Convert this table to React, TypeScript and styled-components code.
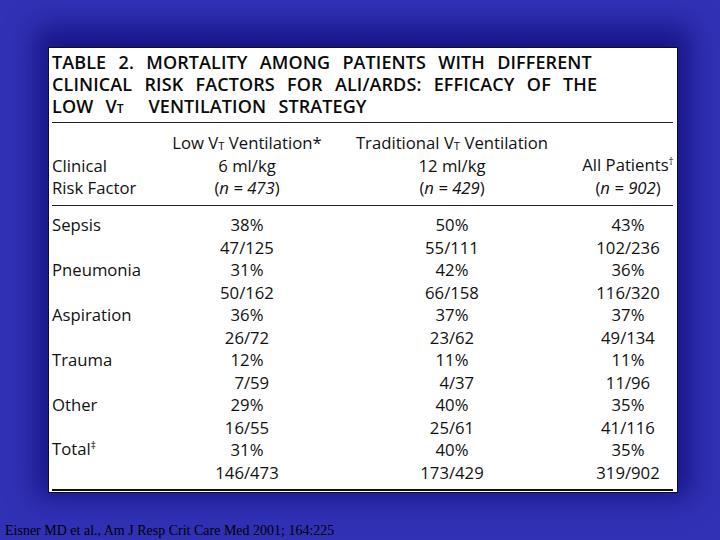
import React from "react";
import styled, { createGlobalStyle } from "styled-components";

const GlobalStyle = createGlobalStyle`
  html, body {
    margin: 0;
    padding: 0;
    background: #3131b6;
  }
`;

const Slide = styled.div`
  width: 720px;
  height: 540px;
  box-sizing: border-box;
  display: flex;
  flex-direction: column;
  background: #3131b6;
  overflow: hidden;
`;

const PanelArea = styled.div`
  padding: 47px 0 0 48px;
`;

const Panel = styled.div`
  width: 630px;
  height: 446px;
  box-sizing: border-box;
  background: #ffffff;
  border: 1px solid #0c0c30;
  box-shadow: 0 -8px 26px 12px rgba(12, 8, 110, 0.7);
  padding: 3px 4px 0 3px;
  font-family: "Open Sans", "Liberation Sans", sans-serif;
  color: #111;
  display: flex;
  flex-direction: column;
`;

const Title = styled.h1`
  margin: 0;
  font-size: 18px;
  font-weight: 600;
  line-height: 22px;
  word-spacing: 7.5px;
  letter-spacing: 0.1px;
  color: #0a0a0a;
  padding-bottom: 2px;
  border-bottom: 1px solid #222;
`;

const Small = styled.span<{ $lower?: boolean }>`
  font-size: 0.68em;
  ${(p) => (p.$lower ? "vertical-align: -0.05em;" : "")}
`;

const Table = styled.div<{ $row: number }>`
  display: grid;
  grid-template-columns: 120px 150px 260px 92px;
  grid-auto-rows: ${(p) => p.$row}px;
  align-items: center;
  font-size: 16.7px;
  line-height: ${(p) => p.$row}px;
`;

const HeadBlock = styled(Table)`
  padding: 10px 0 6px;
  border-bottom: 1px solid #222;
`;

const BodyBlock = styled(Table)`
  padding: 8px 0 5px;
  border-bottom: 2px solid #111;
`;

const Cell = styled.div<{ $align?: "left" | "center" }>`
  text-align: ${(p) => p.$align ?? "center"};
  white-space: pre;
`;

const Label = styled(Cell).attrs({ $align: "left" })``;

const Em = styled.i``;

const Sup = styled.span`
  font-size: 0.6em;
  position: relative;
  top: -0.6em;
`;

const Caption = styled.div`
  margin-top: auto;
  padding: 0 0 1px 5px;
  font-family: "Liberation Serif", serif;
  font-size: 14px;
  color: #000;
`;

type Row = { label: React.ReactNode; vals: [string, string, string][] };

const rows: Row[] = [
  { label: "Sepsis", vals: [["38%", "50%", "43%"], ["47/125", "55/111", "102/236"]] },
  { label: "Pneumonia", vals: [["31%", "42%", "36%"], ["50/162", "66/158", "116/320"]] },
  { label: "Aspiration", vals: [["36%", "37%", "37%"], ["26/72", "23/62", "49/134"]] },
  { label: "Trauma", vals: [["12%", "11%", "11%"], ["\u20077/59", "\u20074/37", "11/96"]] },
  { label: "Other", vals: [["29%", "40%", "35%"], ["16/55", "25/61", "41/116"]] },
  {
    label: (
      <>
        Total<Sup>‡</Sup>
      </>
    ),
    vals: [["31%", "40%", "35%"], ["146/473", "173/429", "319/902"]],
  },
];

const N = ({ v }: { v: string }) => (
  <>
    (<Em>n = {v}</Em>)
  </>
);

export default function App() {
  return (
    <Slide>
      <GlobalStyle />
      <PanelArea>
        <Panel>
          <Title>
            TABLE 2. MORTALITY AMONG PATIENTS WITH DIFFERENT
            <br />
            CLINICAL RISK FACTORS FOR ALI/ARDS: EFFICACY OF THE
            <br />
            LOW V<Small>T</Small>&nbsp; VENTILATION STRATEGY
          </Title>
          <HeadBlock $row={22}>
            <Label />
            <Cell>
              Low V<Small $lower>T</Small> Ventilation*
            </Cell>
            <Cell>
              Traditional V<Small $lower>T</Small> Ventilation
            </Cell>
            <Cell />
            <Label>Clinical</Label>
            <Cell>6 ml/kg</Cell>
            <Cell>12 ml/kg</Cell>
            <Cell>
              All Patients<Sup>†</Sup>
            </Cell>
            <Label>Risk Factor</Label>
            <Cell>
              <N v="473" />
            </Cell>
            <Cell>
              <N v="429" />
            </Cell>
            <Cell>
              <N v="902" />
            </Cell>
          </HeadBlock>
          <BodyBlock $row={22.5}>
            {rows.map((r, i) => (
              <React.Fragment key={i}>
                <Label>{r.label}</Label>
                {r.vals[0].map((v, j) => (
                  <Cell key={`a${j}`}>{v}</Cell>
                ))}
                <Label />
                {r.vals[1].map((v, j) => (
                  <Cell key={`b${j}`}>{v}</Cell>
                ))}
              </React.Fragment>
            ))}
          </BodyBlock>
        </Panel>
      </PanelArea>
      <Caption>Eisner MD et al., Am J Resp Crit Care Med 2001; 164:225</Caption>
    </Slide>
  );
}
